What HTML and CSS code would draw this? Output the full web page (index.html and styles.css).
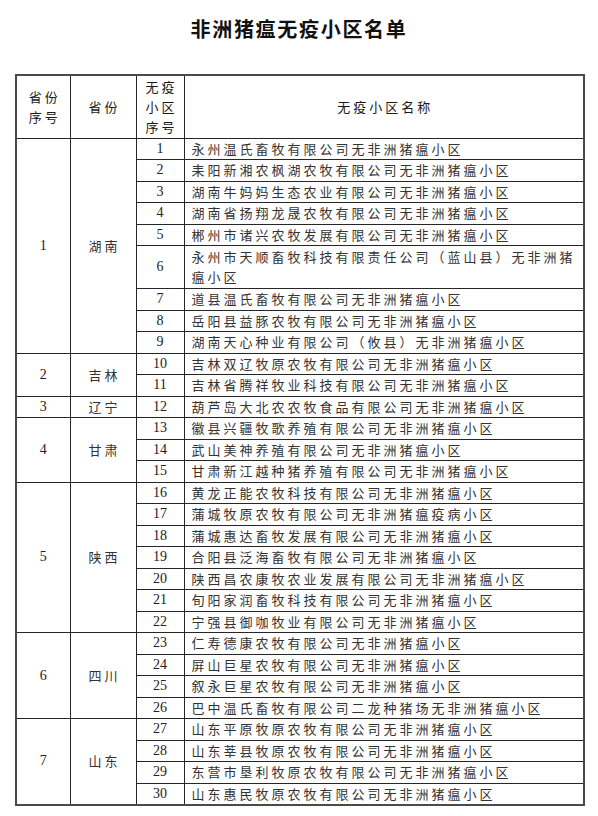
FILE: index.html
```html
<!DOCTYPE html>
<html lang="zh-CN">
<head>
<meta charset="utf-8">
<title>非洲猪瘟无疫小区名单</title>
<link rel="stylesheet" href="styles.css">
</head>
<body>
<h1 class="title">非洲猪瘟无疫小区名单</h1>
<table class="list">
  <colgroup>
    <col class="c-pno"><col class="c-prov"><col class="c-no"><col class="c-name">
  </colgroup>
  <thead>
    <tr class="head">
      <th>省份<br>序号</th>
      <th>省份</th>
      <th>无疫<br>小区<br>序号</th>
      <th>无疫小区名称</th>
    </tr>
  </thead>
  <tbody>
    <tr><td class="pno" rowspan="10">1</td><td class="prov" rowspan="10">湖南</td><td class="no">1</td><td class="name">永州温氏畜牧有限公司无非洲猪瘟小区</td></tr>
    <tr><td class="no">2</td><td class="name">耒阳新湘农枫湖农牧有限公司无非洲猪瘟小区</td></tr>
    <tr><td class="no">3</td><td class="name">湖南牛妈妈生态农业有限公司无非洲猪瘟小区</td></tr>
    <tr><td class="no">4</td><td class="name">湖南省扬翔龙晟农牧有限公司无非洲猪瘟小区</td></tr>
    <tr><td class="no">5</td><td class="name">郴州市诸兴农牧发展有限公司无非洲猪瘟小区</td></tr>
    <tr class="double"><td class="no">6</td><td class="name">永州市天顺畜牧科技有限责任公司（蓝山县）无非洲猪瘟小区</td></tr>
    <tr><td class="no">7</td><td class="name">道县温氏畜牧有限公司无非洲猪瘟小区</td></tr>
    <tr><td class="no">8</td><td class="name">岳阳县益豚农牧有限公司无非洲猪瘟小区</td></tr>
    <tr><td class="no">9</td><td class="name">湖南天心种业有限公司（攸县）无非洲猪瘟小区</td></tr>
    <tr class="spacer"></tr>
    <tr><td class="pno" rowspan="2">2</td><td class="prov" rowspan="2">吉林</td><td class="no">10</td><td class="name">吉林双辽牧原农牧有限公司无非洲猪瘟小区</td></tr>
    <tr><td class="no">11</td><td class="name">吉林省腾祥牧业科技有限公司无非洲猪瘟小区</td></tr>
    <tr><td class="pno">3</td><td class="prov">辽宁</td><td class="no">12</td><td class="name">葫芦岛大北农农牧食品有限公司无非洲猪瘟小区</td></tr>
    <tr><td class="pno" rowspan="3">4</td><td class="prov" rowspan="3">甘肃</td><td class="no">13</td><td class="name">徽县兴疆牧歌养殖有限公司无非洲猪瘟小区</td></tr>
    <tr><td class="no">14</td><td class="name">武山美神养殖有限公司无非洲猪瘟小区</td></tr>
    <tr><td class="no">15</td><td class="name">甘肃新江越种猪养殖有限公司无非洲猪瘟小区</td></tr>
    <tr><td class="pno" rowspan="7">5</td><td class="prov" rowspan="7">陕西</td><td class="no">16</td><td class="name">黄龙正能农牧科技有限公司无非洲猪瘟小区</td></tr>
    <tr><td class="no">17</td><td class="name">蒲城牧原农牧有限公司无非洲猪瘟疫病小区</td></tr>
    <tr><td class="no">18</td><td class="name">蒲城惠达畜牧发展有限公司无非洲猪瘟小区</td></tr>
    <tr><td class="no">19</td><td class="name">合阳县泛海畜牧有限公司无非洲猪瘟小区</td></tr>
    <tr><td class="no">20</td><td class="name">陕西昌农康牧农业发展有限公司无非洲猪瘟小区</td></tr>
    <tr><td class="no">21</td><td class="name">旬阳家润畜牧科技有限公司无非洲猪瘟小区</td></tr>
    <tr><td class="no">22</td><td class="name">宁强县御咖牧业有限公司无非洲猪瘟小区</td></tr>
    <tr><td class="pno" rowspan="4">6</td><td class="prov" rowspan="4">四川</td><td class="no">23</td><td class="name">仁寿德康农牧有限公司无非洲猪瘟小区</td></tr>
    <tr><td class="no">24</td><td class="name">屏山巨星农牧有限公司无非洲猪瘟小区</td></tr>
    <tr><td class="no">25</td><td class="name">叙永巨星农牧有限公司无非洲猪瘟小区</td></tr>
    <tr><td class="no">26</td><td class="name">巴中温氏畜牧有限公司二龙种猪场无非洲猪瘟小区</td></tr>
    <tr><td class="pno" rowspan="4">7</td><td class="prov" rowspan="4">山东</td><td class="no">27</td><td class="name">山东平原牧原农牧有限公司无非洲猪瘟小区</td></tr>
    <tr><td class="no">28</td><td class="name">山东莘县牧原农牧有限公司无非洲猪瘟小区</td></tr>
    <tr><td class="no">29</td><td class="name">东营市垦利牧原农牧有限公司无非洲猪瘟小区</td></tr>
    <tr><td class="no">30</td><td class="name">山东惠民牧原农牧有限公司无非洲猪瘟小区</td></tr>
  </tbody>
</table>
</body>
</html>
```
FILE: styles.css
```css
html, body {
  margin: 0;
  padding: 0;
  background: #ffffff;
}

body {
  font-family: "Noto Sans CJK SC", "Noto Sans", sans-serif;
  color: #333333;
}

.title {
  margin: 0;
  padding: 18px 0 0 0;
  height: 74px;
  box-sizing: border-box;
  font-size: 20px;
  line-height: 22px;
  font-weight: 700;
  letter-spacing: 1.7px;
  text-align: center;
  color: #111111;
}

.list {
  margin-left: 15px;
  width: 568px;
  border-collapse: collapse;
  table-layout: fixed;
  border: 2px solid #4a4a4a;
}

.c-pno { width: 54px; }
.c-prov { width: 66px; }
.c-no { width: 48px; }
.c-name { width: 400px; }

.list th,
.list td {
  border: 1px solid #262626;
  padding: 0;
  vertical-align: middle;
}

.list .head {
  height: 63px;
}

.list .head th {
  font-size: 13px;
  line-height: 20px;
  font-weight: 400;
  letter-spacing: 3px;
  padding-left: 3px;
  color: #1a1a1a;
  text-align: center;
}

.list tbody tr {
  height: 21.5px;
}

.list tbody tr.double {
  height: 43px;
}

.list tbody tr.spacer {
  height: 0;
}

.list td.pno,
.list td.no {
  font-family: "Liberation Serif", "Times New Roman", serif;
  font-size: 14px;
  line-height: 18px;
  text-align: center;
  color: #222222;
}

.list td.prov {
  font-size: 13px;
  line-height: 18px;
  letter-spacing: 3px;
  padding-left: 3px;
  text-align: center;
}

.list td.name {
  font-size: 13px;
  line-height: 20px;
  letter-spacing: 3px;
  padding: 0 3px 0 7px;
  text-align: left;
}
```
